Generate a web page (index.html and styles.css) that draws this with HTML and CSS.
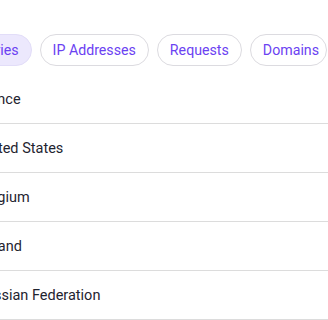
FILE: index.html
```html
<!DOCTYPE html>
<html lang="en">
<head>
<meta charset="utf-8">
<title>Countries</title>
<link rel="stylesheet" href="styles.css">
</head>
<body>
<div class="viewport">
  <nav class="tabs">
    <button class="pill pill-active">Countries</button>
    <button class="pill">IP Addresses</button>
    <button class="pill">Requests</button>
    <button class="pill pill-last">Domains</button>
  </nav>
  <ul class="list">
    <li class="row">France</li>
    <li class="row">United States</li>
    <li class="row">Belgium</li>
    <li class="row">Poland</li>
    <li class="row">Russian Federation</li>
  </ul>
</div>
</body>
</html>
```

FILE: styles.css
```css
html, body {
  margin: 0;
  padding: 0;
  background: #ffffff;
}
body {
  font-family: Roboto, "Noto Sans", sans-serif;
  overflow: hidden;
}
.viewport {
  width: 328px;
  overflow: hidden;
}
.tabs {
  display: flex;
  justify-content: flex-end;
  gap: 8px;
  margin-top: 34px;
  padding-right: 1px;
}
.pill {
  flex: none;
  height: 32px;
  box-sizing: border-box;
  padding: 0 12px;
  border: 1px solid #dcdbe0;
  border-radius: 16px;
  background: #ffffff;
  color: #6b42f2;
  font-family: Roboto, "Noto Sans", sans-serif;
  font-size: 14.2px;
  line-height: 30px;
}
.pill-active {
  background: #ece8fd;
  border-color: #e2ddf8;
}
.pill-last {
  padding-right: 7px;
}
.list {
  list-style: none;
  margin: 9px 0 0 -23px;
  padding: 0;
}
.row {
  display: flex;
  align-items: center;
  height: 49px;
  box-sizing: border-box;
  padding-top: 1px;
  border-bottom: 1px solid #dcdcdc;
  font-size: 14.5px;
  color: #1f2430;
}
```
